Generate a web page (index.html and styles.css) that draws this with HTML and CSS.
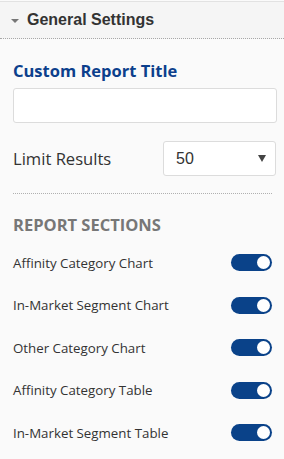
FILE: index.html
```html
<!DOCTYPE html>
<html>
<head>
<meta charset="utf-8">
<link rel="stylesheet" href="styles.css">
</head>
<body>
<div class="panel">
  <div class="header">
    <span class="caret"></span>
    <span class="header-title">General Settings</span>
  </div>
  <div class="content">
    <div class="field-title">Custom Report Title</div>
    <div class="text-input"></div>
    <div class="limit-row">
      <span class="limit-label">Limit Results</span>
      <div class="select"><span>50</span><span class="select-arrow"></span></div>
    </div>
    <div class="separator"></div>
    <div class="section-title">REPORT SECTIONS</div>
    <div class="toggle-list">
      <div class="toggle-row"><span>Affinity Category Chart</span><span class="toggle"><span class="knob"></span></span></div>
      <div class="toggle-row"><span>In-Market Segment Chart</span><span class="toggle"><span class="knob"></span></span></div>
      <div class="toggle-row"><span>Other Category Chart</span><span class="toggle"><span class="knob"></span></span></div>
      <div class="toggle-row"><span>Affinity Category Table</span><span class="toggle"><span class="knob"></span></span></div>
      <div class="toggle-row"><span>In-Market Segment Table</span><span class="toggle"><span class="knob"></span></span></div>
    </div>
  </div>
</div>
</body>
</html>
```
FILE: styles.css
```css
html, body {
  margin: 0;
  padding: 0;
  background: #fafafa;
}
body {
  font-family: "Open Sans", sans-serif;
  color: #333;
}
.panel {
  width: 284px;
  height: 459px;
  overflow: hidden;
  padding-top: 1px;
  background: #fafafa;
}
.header {
  height: 36px;
  border-top: 1px solid #e2e2e2;
  border-bottom: 1px dotted #a8a8a8;
  background: #f5f5f5;
  display: flex;
  align-items: center;
  padding-left: 11px;
}
.caret {
  width: 0;
  height: 0;
  border-left: 4px solid transparent;
  border-right: 4px solid transparent;
  border-top: 4px solid #777;
  margin-right: 8px;
  margin-top: 1px;
}
.header-title {
  font-family: "Liberation Sans", Arial, sans-serif;
  font-weight: bold;
  font-size: 16px;
  color: #333;
}
.content {
  padding: 0 7px 0 13px;
}
.field-title {
  margin-top: 21px;
  font-weight: 700;
  font-size: 16.5px;
  line-height: 22px;
  color: #0c3f8c;
}
.text-input {
  margin-top: 6px;
  height: 33px;
  border: 1px solid #dcdcdc;
  border-radius: 3px;
  background: #fff;
}
.limit-row {
  margin-top: 18px;
  display: flex;
  align-items: center;
  justify-content: space-between;
  padding-right: 1px;
}
.limit-label {
  font-size: 16.6px;
  color: #333;
}
.select {
  border: 1px solid #dcdcdc;
  border-radius: 3px;
  background: #fff;
  display: flex;
  align-items: center;
  justify-content: space-between;
  padding: 0 9px 0 12px;
  box-sizing: border-box;
  width: 113px;
  height: 35px;
  font-family: "Liberation Sans", Arial, sans-serif;
  font-size: 16px;
  color: #333;
}
.select-arrow {
  width: 0;
  height: 0;
  border-left: 4px solid transparent;
  border-right: 4px solid transparent;
  border-top: 7px solid #444;
}
.separator {
  margin-top: 17px;
  margin-right: 5px;
  border-top: 1px dotted #b0b0b0;
}
.section-title {
  margin-top: 20px;
  font-weight: bold;
  font-size: 16.5px;
  line-height: 22px;
  color: #777;
}
.toggle-list {
  margin-top: 18px;
  display: flex;
  flex-direction: column;
  gap: 25.5px;
}
.toggle-row {
  height: 17px;
  display: flex;
  align-items: center;
  justify-content: space-between;
  font-size: 13.3px;
  color: #333;
  padding-right: 5px;
}
.toggle {
  width: 41px;
  height: 17px;
  border-radius: 9px;
  background: #0a4289;
  position: relative;
}
.knob {
  position: absolute;
  right: 2px;
  top: 2px;
  width: 13px;
  height: 13px;
  border-radius: 50%;
  background: #fff;
}
```
